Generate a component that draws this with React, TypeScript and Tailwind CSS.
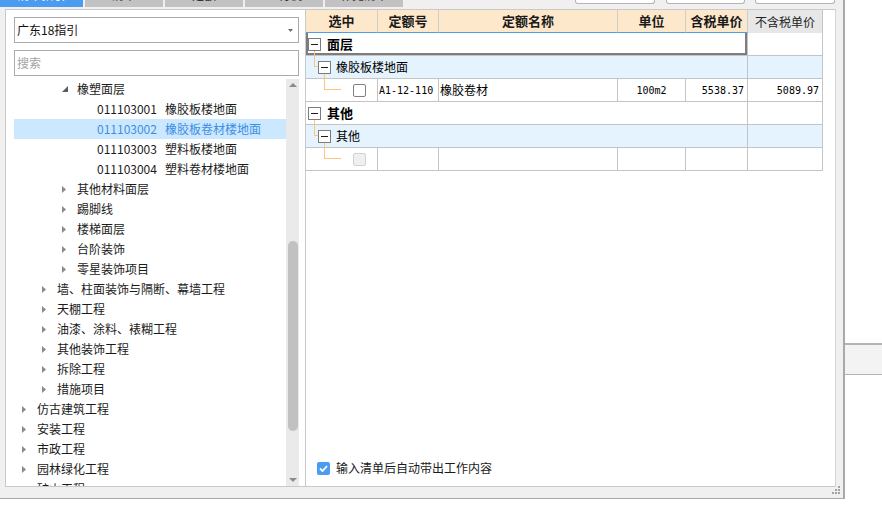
import React from "react";

type TreeItem = {
  level: 1 | 2 | 3 | 4;
  text: string;
  code?: string;
  state: "open" | "closed" | "leaf";
  selected?: boolean;
};

const tree: TreeItem[] = [
  { level: 3, text: "橡塑面层", state: "open" },
  { level: 4, code: "011103001", text: "橡胶板楼地面", state: "leaf" },
  { level: 4, code: "011103002", text: "橡胶板卷材楼地面", state: "leaf", selected: true },
  { level: 4, code: "011103003", text: "塑料板楼地面", state: "leaf" },
  { level: 4, code: "011103004", text: "塑料卷材楼地面", state: "leaf" },
  { level: 3, text: "其他材料面层", state: "closed" },
  { level: 3, text: "踢脚线", state: "closed" },
  { level: 3, text: "楼梯面层", state: "closed" },
  { level: 3, text: "台阶装饰", state: "closed" },
  { level: 3, text: "零星装饰项目", state: "closed" },
  { level: 2, text: "墙、柱面装饰与隔断、幕墙工程", state: "closed" },
  { level: 2, text: "天棚工程", state: "closed" },
  { level: 2, text: "油漆、涂料、裱糊工程", state: "closed" },
  { level: 2, text: "其他装饰工程", state: "closed" },
  { level: 2, text: "拆除工程", state: "closed" },
  { level: 2, text: "措施项目", state: "closed" },
  { level: 1, text: "仿古建筑工程", state: "closed" },
  { level: 1, text: "安装工程", state: "closed" },
  { level: 1, text: "市政工程", state: "closed" },
  { level: 1, text: "园林绿化工程", state: "closed" },
  { level: 1, text: "矿山工程", state: "closed" },
];

const pad: Record<number, string> = {
  1: "pl-[6px]",
  2: "pl-[26px]",
  3: "pl-[46px]",
  4: "pl-[66px]",
};

function TreeRow({ item }: { item: TreeItem }) {
  return (
    <div
      className={`flex h-[20px] items-center whitespace-nowrap ${pad[item.level]} ${
        item.selected ? "bg-[#cce8ff] text-[#3b8ee6]" : "text-[#1b1b1b]"
      }`}
    >
      <div className="w-[17px] h-[20px] flex items-center shrink-0">
        {item.state === "open" && (
          <svg className="ml-[2px]" width="6" height="6" viewBox="0 0 6 6">
            <path d="M6 0 L6 6 L0 6 Z" fill="#5c5c5c" />
          </svg>
        )}
        {item.state === "closed" && (
          <svg className="ml-[2px]" width="4" height="7" viewBox="0 0 4 7">
            <path d="M0 0 L4 3.5 L0 7 Z" fill="#8a8a8a" />
          </svg>
        )}
      </div>
      {item.code && <span className="mr-[8px]">{item.code}</span>}
      <span>{item.text}</span>
    </div>
  );
}

function LeftPanel() {
  return (
    <div className="w-[301px] h-full bg-white border border-[#c9c9c9] pl-[8px] pr-[6px] pt-[7px] flex flex-col shrink-0">
      <div className="h-[26px] border border-[#ababab] flex items-center pl-[2px] pr-[5px] text-[12px] text-[#111]">
        <span className="flex-1">广东18指引</span>
        <svg width="5" height="3" viewBox="0 0 5 3">
          <path d="M0 0 L5 0 L2.5 3 Z" fill="#6d6d6d" />
        </svg>
      </div>
      <div className="mt-[7px] h-[26px] border border-[#ababab] flex items-center pl-[2px] text-[12px] text-[#a3a3a3]">
        搜索
      </div>
      <div className="mt-[3px] flex-1 flex min-h-0">
        <div className="flex-1 overflow-hidden">
          {tree.map((t, i) => (
            <TreeRow key={i} item={t} />
          ))}
        </div>
        <div className="w-[13px] bg-[#eaeaea] flex flex-col items-center">
          <div className="h-[12px] flex items-center justify-center">
            <svg width="8" height="4" viewBox="0 0 8 4">
              <path d="M0 4 L4 0 L8 4 Z" fill="#8c8c8c" />
            </svg>
          </div>
          <div className="h-[150px]" />
          <div className="w-[10px] h-[190px] rounded-[5px] bg-[#c1c1c1]" />
          <div className="flex-1" />
          <div className="h-[12px] flex items-center justify-center">
            <svg width="8" height="4" viewBox="0 0 8 4">
              <path d="M0 0 L8 0 L4 4 Z" fill="#8c8c8c" />
            </svg>
          </div>
        </div>
      </div>
    </div>
  );
}

function Exp() {
  return (
    <div className="relative z-20 w-[13px] h-[13px] border border-[#7c7c7c] bg-white flex items-center justify-center shrink-0">
      <div className="w-[7px] h-[1px] bg-[#1e1e1e]" />
    </div>
  );
}

const OR = "bg-[#fdc678]";

function GroupRow({
  child,
  text,
  focus,
}: {
  child: boolean;
  text: string;
  focus?: boolean;
}) {
  const bg = child ? "bg-[#e5f3fe]" : "bg-white";
  return (
    <div className="flex">
      <div
        className={`relative w-[442px] h-[23px] ${bg} border-r border-b border-[#c4c4c4] flex items-center ${
          child ? "pl-[12px]" : "pl-[2px]"
        }`}
      >
        {child && (
          <>
            <div className={`absolute z-10 left-[8px] top-[-1px] h-[11px] w-px ${OR}`} />
            <div className={`absolute z-10 left-[8px] top-[10px] w-[4px] h-px ${OR}`} />
          </>
        )}
        <Exp />
        {child ? (
          <span className="ml-[5px] text-[12px]">{text}</span>
        ) : (
          <span className="ml-[6px] text-[13px] font-bold">{text}</span>
        )}
        {focus && (
          <div className="absolute inset-0 border-l-2 border-r-2 border-b-2 border-[#7d7d7d]" />
        )}
        <div
          className={`absolute z-10 ${child ? "left-[18px]" : "left-[8px]"} top-[17px] bottom-[-1px] w-px ${OR}`}
        />
      </div>
      <div className={`w-[75px] h-[23px] ${bg} border-r border-b border-[#c4c4c4]`} />
    </div>
  );
}

const MONO = "font-['DejaVu_Sans_Mono',monospace] text-[10px]";

function DataRow({
  disabled,
  code,
  name,
  unit,
  p1,
  p2,
}: {
  disabled?: boolean;
  code?: string;
  name?: string;
  unit?: string;
  p1?: string;
  p2?: string;
}) {
  const c = "h-[23px] border-r border-b border-[#c4c4c4] flex items-center whitespace-nowrap";
  return (
    <div className="flex">
      <div className={`relative w-[72px] ${c}`}>
        <div className={`absolute left-[18px] top-[-1px] h-[12px] w-px ${OR}`} />
        <div className={`absolute left-[18px] top-[10px] w-[17px] h-px ${OR}`} />
        <div
          className={`ml-[47px] w-[13px] h-[13px] rounded-[2px] border ${
            disabled ? "border-[#d2d2d2] bg-[#efefef]" : "border-[#808080] bg-white"
          }`}
        />
      </div>
      <div className={`w-[61px] pl-[1px] ${MONO} ${c}`}>{code}</div>
      <div className={`w-[179px] pl-[1px] text-[12px] ${c}`}>{name}</div>
      <div className={`w-[68px] justify-center ${MONO} ${c}`}>{unit}</div>
      <div className={`w-[62px] justify-end pr-[3px] ${MONO} ${c}`}>{p1}</div>
      <div className={`w-[75px] justify-end pr-[3px] ${MONO} ${c}`}>{p2}</div>
    </div>
  );
}

function HeaderCell({ w, children }: { w: string; children: React.ReactNode }) {
  return (
    <div
      className={`${w} h-[23px] bg-[#fee8cb] border-r border-r-[#cdcdcd] border-b border-b-[#4c9ef0] flex items-center justify-center font-bold text-[13px] text-[#1a1a1a]`}
    >
      {children}
    </div>
  );
}

function RightPanel() {
  return (
    <div className="w-[530px] h-full bg-white border-t border-r border-b border-t-[#c9c9c9] border-b-[#c9c9c9] border-r-[#d6d6d6] flex flex-col shrink-0">
      <div className="w-[517px]">
        <div className="flex">
          <HeaderCell w="w-[72px]">选中</HeaderCell>
          <HeaderCell w="w-[61px]">定额号</HeaderCell>
          <HeaderCell w="w-[179px]">定额名称</HeaderCell>
          <HeaderCell w="w-[68px]">单位</HeaderCell>
          <HeaderCell w="w-[62px]">含税单价</HeaderCell>
          <div className="w-[75px] h-[23px] bg-[#e7e7e7] border-r border-[#c4c4c4] flex items-center justify-center text-[12px] text-[#222]">
            不含税单价
          </div>
        </div>
        <GroupRow child={false} text="面层" focus />
        <GroupRow child text="橡胶板楼地面" />
        <DataRow code="A1-12-110" name="橡胶卷材" unit="100m2" p1="5538.37" p2="5089.97" />
        <GroupRow child={false} text="其他" />
        <GroupRow child text="其他" />
        <DataRow disabled />
      </div>
      <div className="flex-1" />
      <div className="flex items-center pl-[11px] pb-[9px]">
        <div className="w-[13px] h-[13px] rounded-[2px] bg-[#4a9cf0] flex items-center justify-center">
          <svg width="9" height="7" viewBox="0 0 9 7">
            <path d="M1 3.5 L3.5 6 L8 1" stroke="white" strokeWidth="1.8" fill="none" />
          </svg>
        </div>
        <span className="ml-[6px] text-[12px] text-[#1a1a1a]">输入清单后自动带出工作内容</span>
      </div>
    </div>
  );
}

function Tab({ w, active, text, first }: { w: string; active?: boolean; text: string; first?: boolean }) {
  return (
    <div
      className={`${w} ${first ? "" : "ml-[2px]"} h-[7px] overflow-hidden ${
        active ? "bg-[#4b9cf0] text-white" : "bg-[#c2c2c2] text-[#333]"
      }`}
    >
      <div className="h-[20px] -mt-[15px] flex items-center justify-center text-[12px]">{text}</div>
    </div>
  );
}

export default function App() {
  return (
    <div className="w-[882px] h-[522px] bg-white flex items-start overflow-hidden font-['Noto_Sans_CJK_SC',sans-serif] text-[12px] text-black">
      <div className="relative w-[845px] h-[499px] bg-[#f0f0f0] border-r-2 border-b border-[#a9a9a9] flex flex-col shrink-0">
        <div className="flex h-[7px] items-start">
          <Tab w="w-[83px]" active text="清单指引" first />
          <Tab w="w-[78px]" text="清单" />
          <Tab w="w-[78px]" text="定额" />
          <Tab w="w-[78px]" text="人材机" />
          <Tab w="w-[78px]" text="补充清单" />
          <div className="flex-1" />
          <div className="w-[80px] h-[4px] bg-white border-x border-b border-[#b4b4b4] rounded-b-[3px]" />
          <div className="ml-[11px] w-[79px] h-[4px] bg-white border-x border-b border-[#b4b4b4] rounded-b-[3px]" />
          <div className="ml-[10px] mr-[8px] w-[80px] h-[4px] bg-white border-x border-b border-[#b4b4b4] rounded-b-[3px]" />
        </div>
        <div className="mt-[2px] flex pl-[5px] h-[478px]">
          <LeftPanel />
          <RightPanel />
        </div>
        <svg className="absolute right-[2px] bottom-[3px]" width="9" height="9" viewBox="0 0 9 9">
          <rect x="6" y="0" width="2" height="2" fill="#a3a3a3" />
          <rect x="3" y="3" width="2" height="2" fill="#a3a3a3" />
          <rect x="6" y="3" width="2" height="2" fill="#a3a3a3" />
          <rect x="0" y="6" width="2" height="2" fill="#a3a3a3" />
          <rect x="3" y="6" width="2" height="2" fill="#a3a3a3" />
          <rect x="6" y="6" width="2" height="2" fill="#a3a3a3" />
        </svg>
      </div>
      <div className="flex-1 flex flex-col">
        <div className="mt-[343px] h-[32px] bg-[#f3f3f3] border-t-2 border-b border-[#b4b4b4]" />
      </div>
    </div>
  );
}
